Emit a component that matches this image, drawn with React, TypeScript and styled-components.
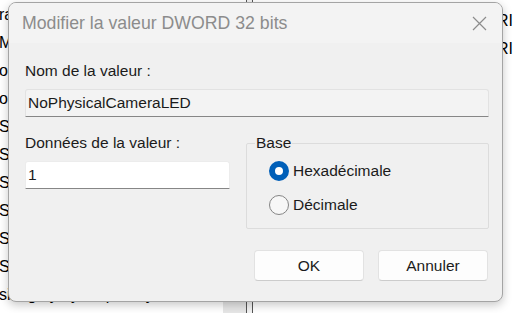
import React from 'react'
import styled, { createGlobalStyle } from 'styled-components'

const GlobalStyle = createGlobalStyle`
  html, body {
    margin: 0;
    padding: 0;
    background: #ffffff;
  }
  body {
    font-family: 'Liberation Sans', Arial, sans-serif;
  }
`

// Value names of the registry list behind the dialog; only their first letters show.
const valueNames = ['ra', 'M', 'ol', 'oS', 'SE', 'SD', 'SD', 'SD', 'SF', 'SI', 'six  g   y   y      p       y']

const valueTypes = ['RI', 'RI']

export default function App() {
  return (
    <>
      <GlobalStyle />
      <Screen>
        <Backdrop>
          <NamesPane>
            {valueNames.map((name, i) => (
              <ListRow key={i}>{name}</ListRow>
            ))}
            <Highlight />
          </NamesPane>
          <Splitter />
          <TypesPane>
            {valueTypes.map((t, i) => (
              <ListRow key={i}>{t}</ListRow>
            ))}
          </TypesPane>
        </Backdrop>

        <Window>
          <TitleBar>
            <Title>Modifier la valeur DWORD 32 bits</Title>
            <CloseButton aria-label="Fermer">
              <svg width="15" height="15" viewBox="0 0 15 15">
                <path d="M1 1 L14 14 M14 1 L1 14" stroke="#8c8c8c" strokeWidth="1.2" fill="none" />
              </svg>
            </CloseButton>
          </TitleBar>

          <Body>
            <Label>Nom de la valeur :</Label>
            <TextField $disabled readOnly defaultValue="NoPhysicalCameraLED" />

            <Columns>
              <DataColumn>
                <Label>Données de la valeur :</Label>
                <TextField defaultValue="1" />
              </DataColumn>

              <GroupBox>
                <Legend>Base</Legend>
                <RadioList>
                  <RadioRow>
                    <RadioDot $checked />
                    <span>Hexadécimale</span>
                  </RadioRow>
                  <RadioRow>
                    <RadioDot />
                    <span>Décimale</span>
                  </RadioRow>
                </RadioList>
              </GroupBox>
            </Columns>

            <Buttons>
              <Button>OK</Button>
              <Button>Annuler</Button>
            </Buttons>
          </Body>
        </Window>
      </Screen>
    </>
  )
}

const Screen = styled.div`
  position: relative;
  width: 513px;
  height: 313px;
  overflow: hidden;
  background: #ffffff;
`

const Backdrop = styled.div`
  display: flex;
  height: 100%;
  font-size: 16px;
  color: #000000;
`

const NamesPane = styled.div`
  position: relative;
  width: 250px;
  padding-top: 1px;
  margin-left: -1px;
  overflow: hidden;
`

const Highlight = styled.div`
  position: absolute;
  left: 224px;
  right: 0;
  bottom: 0;
  height: 12px;
  background: #e6e6e6;
`

const Splitter = styled.div`
  width: 5px;
  border-left: 1px solid #555555;
  border-right: 1px solid #555555;
  background: #f2f2f2;
`

const TypesPane = styled.div`
  flex: 1;
  padding-top: 7px;
  padding-left: 244px;
`

const ListRow = styled.div`
  height: 28px;
  line-height: 28px;
  white-space: pre;
`

const Window = styled.div`
  position: absolute;
  left: 8px;
  top: 2px;
  width: 495px;
  height: 300px;
  box-sizing: border-box;
  display: flex;
  flex-direction: column;
  background: #f0f0f0;
  border: 1px solid #a4a4a4;
  border-radius: 8px;
  box-shadow: 0 3px 10px rgba(0, 0, 0, 0.22);
  overflow: hidden;
  color: #1b1b1b;
`

const TitleBar = styled.div`
  display: flex;
  align-items: center;
  justify-content: space-between;
  height: 40px;
  padding-left: 13px;
  background: #f3f3f3;
`

const Title = styled.div`
  font-size: 17.7px;
  color: #8c8c8c;
`

const CloseButton = styled.button`
  display: flex;
  align-items: center;
  justify-content: center;
  width: 46px;
  height: 40px;
  padding: 0;
  border: none;
  background: transparent;
`

const Body = styled.div`
  display: flex;
  flex-direction: column;
  padding: 18px 13px 0 16px;
  font-size: 15.5px;
`

const Label = styled.div`
  line-height: 20px;
  height: 20px;
`

const TextField = styled.input<{ $disabled?: boolean }>`
  box-sizing: border-box;
  width: 100%;
  height: 28px;
  margin: 8px 0 0;
  padding: 0 2px;
  font: inherit;
  color: #1b1b1b;
  background: ${p => (p.$disabled ? '#f3f3f3' : '#ffffff')};
  border: 1px solid ${p => (p.$disabled ? '#e2e2e2' : '#ececec')};
  border-bottom-color: #868686;
  border-radius: 3px 3px 0 0;
  outline: none;
`

const Columns = styled.div`
  display: flex;
  align-items: flex-start;
  margin-top: 16px;
  gap: 16px;
`

const DataColumn = styled.div`
  display: flex;
  flex-direction: column;
  width: 205px;
`

const GroupBox = styled.fieldset`
  flex: 1;
  margin: 0;
  padding: 0 0 11px 8px;
  border: 1px solid #dcdcdc;
  border-radius: 2px;
  min-width: 0;
`

const Legend = styled.legend`
  padding: 0 1px;
  line-height: 20px;
`

const RadioList = styled.div`
  display: flex;
  flex-direction: column;
  gap: 10px;
  padding: 6px 0 0 14px;
`

const RadioRow = styled.label`
  display: flex;
  align-items: center;
  gap: 4px;
  height: 24px;
`

const RadioDot = styled.span<{ $checked?: boolean }>`
  box-sizing: border-box;
  width: 20px;
  height: 20px;
  border-radius: 50%;
  background: ${p => (p.$checked ? '#ffffff' : '#f7f7f7')};
  border: ${p => (p.$checked ? '6px solid #005fb8' : '1px solid #858585')};
`

const Buttons = styled.div`
  display: flex;
  justify-content: flex-end;
  gap: 14px;
  margin-top: 21px;
  padding-right: 1px;
`

const Button = styled.button`
  box-sizing: border-box;
  width: 110px;
  height: 31px;
  font: inherit;
  color: #1b1b1b;
  background: #fdfdfd;
  border: 1px solid #e2e2e2;
  border-bottom-color: #cccccc;
  border-radius: 4px;
`
